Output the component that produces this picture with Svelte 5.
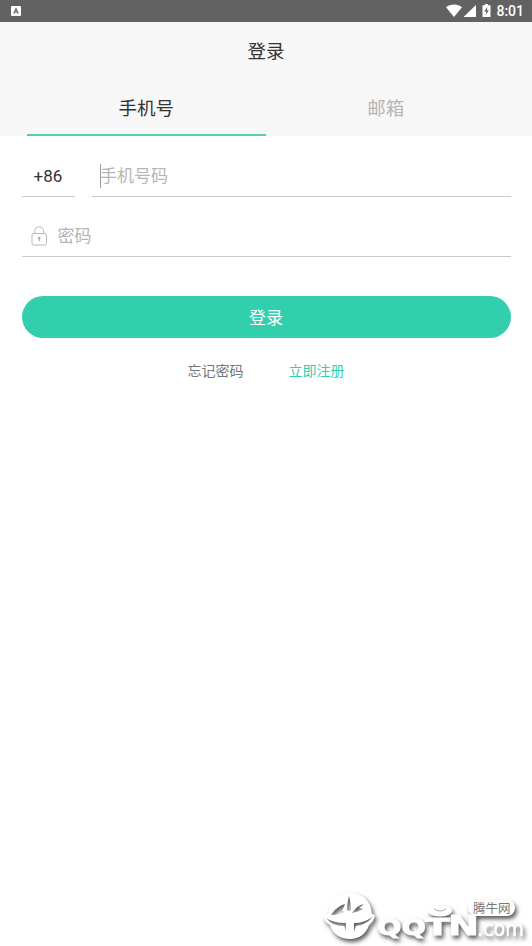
<script lang="ts">
  let tab = $state("phone");
  let phone = $state("");
  let password = $state("");

  const tabs = [
    { id: "phone", label: "手机号" },
    { id: "email", label: "邮箱" },
  ];
</script>

<main class="screen">
  <div class="status-bar">
    <svg class="app-badge" viewBox="0 0 10 10">
      <rect width="10" height="10" rx="1" fill="#fff" />
      <path d="M2.8 7.4 5 2.7l2.2 4.7M3.6 6h2.8" fill="none" stroke="#626262" stroke-width="1.2" />
    </svg>
    <div class="status-icons">
      <svg width="45" height="16" viewBox="0 0 45 16" fill="#fff">
        <path d="M0 4.2C4.5.5 11.5.5 16 4.2L8 14Z" />
        <path d="M30 2v12H17.5Z" />
        <path d="M39 1h3v1.3h2.5V14H36.5V2.3H39Z" />
        <path d="m41.4 4-3.2 4.6h2L39.6 12l3.3-4.8h-2Z" fill="#626262" />
      </svg>
      <span>8:01</span>
    </div>
  </div>

  <header>
    <h1>登录</h1>
    <nav class="tabs">
      {#each tabs as item}
        <button class:active={tab === item.id} onclick={() => (tab = item.id)}>{item.label}</button>
      {/each}
    </nav>
  </header>

  <form onsubmit={(e) => e.preventDefault()}>
    <div class="phone-row">
      <button type="button" class="country">+86</button>
      <label class="field phone">
        <span class="caret"></span>
        <input type="tel" placeholder="手机号码" bind:value={phone} />
      </label>
    </div>
    <label class="field password">
      <svg width="17" height="20" viewBox="0 0 17 20" fill="none" stroke="#b9b9b9">
        <rect x="1" y="7.5" width="14.5" height="11.5" rx="1.8" />
        <path d="M3.7 7.3V5.2a4.5 4.5 0 0 1 9 0v2.1" />
        <circle cx="8.2" cy="12" r="1" fill="#aaa" />
        <path d="M8.2 12v3.3" stroke="#aaa" stroke-width="1.2" />
      </svg>
      <input type="password" placeholder="密码" bind:value={password} />
    </label>
    <button class="submit" type="submit">登录</button>
  </form>

  <div class="links">
    <a href="#forgot">忘记密码</a>
    <a class="register" href="#register">立即注册</a>
  </div>

  <svg class="watermark" viewBox="0 0 220 66">
    <g class="shadowed">
      <path
        fill="#fff"
        fill-rule="evenodd"
        d="M16 34C18 21 26 13 38 13s21 7 22 21l3 1c-1 5-3 8-6 10-3 9-10 14-19 14-10 0-17-5-20-14-4-2-6-5-7-9Z
          M37 15c-1 5-2 10-2 15l2 1 2-1c0-5-1-10-2-15Z
          M33 24c-6 2-11 6-14 11 5 0 9-1 14-3l-3-1Z
          M52 24c-5 1-9 4-12 9 4-1 8-2 11-4l-4-1Z
          M14 38c6 4 13 5 20 5v8l-2-5c-8 0-14-3-18-8Z
          M60 37c-5 4-11 6-18 6v9l2-6c7-1 13-4 16-9Z"
      />
      <text class="brand" x="65" y="55" textLength="49" lengthAdjust="spacingAndGlyphs">QQ</text>
      <text class="brand tee" x="113" y="55" textLength="25" lengthAdjust="spacingAndGlyphs">T</text>
      <text class="brand tall" x="136" y="55" textLength="31" lengthAdjust="spacingAndGlyphs">N</text>
      <ellipse cx="128" cy="31" rx="12" ry="5.5" fill="#fff" />
      <path d="M122 29q6 4 12 0" fill="none" stroke="#aaa" stroke-width="1" />
      <text class="domain" x="165" y="55.5" textLength="47" lengthAdjust="spacingAndGlyphs">.com</text>
      <rect x="156" y="20" width="47" height="16" rx="8" fill="#fff" />
    </g>
    <text class="site" x="161" y="32.5">腾牛网</text>
  </svg>
</main>

<style>
  :global(body) {
    margin: 0;
    background: #fff;
  }

  .screen {
    position: relative;
    height: 946px;
    overflow: hidden;
    background: #fff;
    color: #333;
    font-family: Roboto, "Noto Sans CJK SC", sans-serif;
  }

  .status-bar {
    display: flex;
    align-items: center;
    justify-content: space-between;
    height: 22px;
    box-sizing: border-box;
    padding: 0 8px 0 11px;
    background: #626262;
    color: #fff;
  }

  .app-badge {
    width: 10px;
    height: 10px;
  }

  .status-icons {
    display: flex;
    align-items: center;
    gap: 5px;
    font-size: 14px;
    font-weight: 500;
    line-height: 22px;
  }

  header {
    height: 114px;
    background: #f7f7f7;
  }

  h1 {
    margin: 0;
    height: 57px;
    font-size: 18.5px;
    font-weight: 400;
    line-height: 60px;
    text-align: center;
  }

  button,
  input {
    border: 0;
    padding: 0;
    background: none;
    color: inherit;
    font: inherit;
  }

  .tabs {
    display: flex;
    height: 57px;
    padding: 0 26.5px;
  }

  .tabs button {
    flex: 1;
    box-sizing: border-box;
    padding-top: 5px;
    border-bottom: 2px solid transparent;
    color: #b5b5b5;
    font-size: 18.5px;
    line-height: 50px;
  }

  .tabs button.active {
    border-color: #55cdb2;
    color: #333;
  }

  form {
    padding: 19px 21.5px 0;
  }

  .phone-row {
    display: flex;
    gap: 17.5px;
  }

  .country {
    width: 53px;
    height: 42px;
    border-bottom: 1px solid #c9c9c9;
    font-size: 17px;
  }

  .field {
    display: flex;
    align-items: center;
    height: 41px;
    border-bottom: 1px solid #c9c9c9;
  }

  .phone {
    flex: 1;
    padding-left: 8px;
  }

  .caret {
    width: 1px;
    height: 24px;
    margin-right: -1px;
    background: #999;
  }

  .field input {
    flex: 1;
    min-width: 0;
    font-size: 17px;
    outline: 0;
  }

  .field input::placeholder {
    color: #b5b5b5;
    opacity: 1;
  }

  .password {
    margin-top: 18px;
    padding-left: 9px;
    gap: 10px;
  }

  .password input {
    padding-top: 1px;
  }

  .submit {
    width: 100%;
    height: 42px;
    margin-top: 38.5px;
    border-radius: 22px;
    background: #31cfad;
    color: #fff;
    font-size: 17px;
  }

  .links {
    display: flex;
    justify-content: center;
    gap: 45px;
    margin-top: 23.5px;
    font-size: 14px;
    line-height: 21px;
  }

  .links a {
    color: #777;
    text-decoration: none;
  }

  .links .register {
    color: #31cfad;
  }

  /* Site mark laid over the bottom corner */
  .watermark {
    position: absolute;
    right: 0;
    bottom: 0;
    width: 220px;
    height: 66px;
  }

  .shadowed {
    filter: drop-shadow(2px 3px 2px rgba(0, 0, 0, 0.65));
  }

  .brand {
    fill: #fff;
    stroke: #fff;
    stroke-width: 0.8;
    font: 700 21px "DejaVu Sans", sans-serif;
  }

  .tee {
    font-size: 23px;
  }

  .tall {
    font-size: 27px;
  }

  .domain {
    fill: #fff;
    stroke: #fff;
    stroke-width: 0.5;
    font: 400 22px "DejaVu Sans", sans-serif;
  }

  .site {
    fill: #777;
    font-size: 12.5px;
  }
</style>
